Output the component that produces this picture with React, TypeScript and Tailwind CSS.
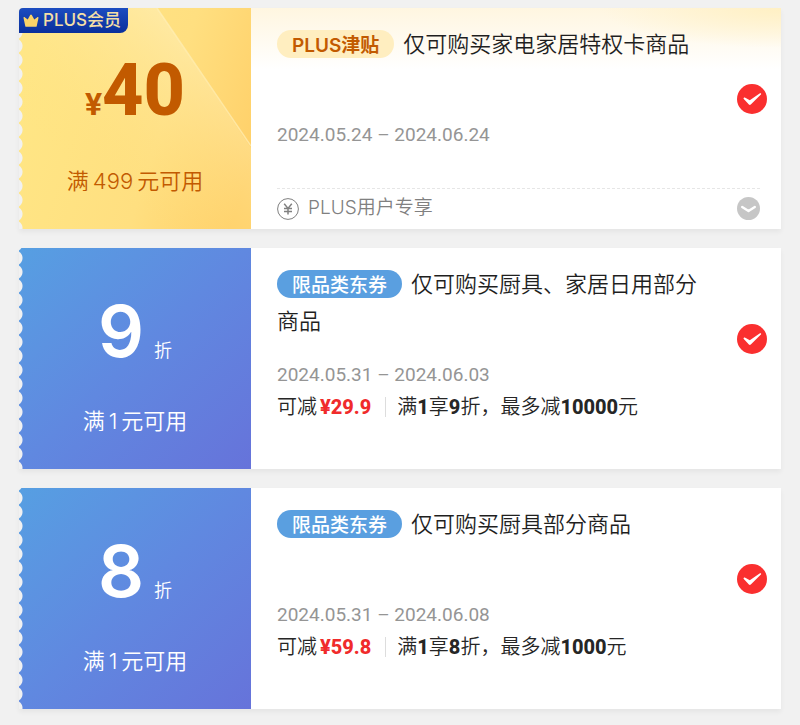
import { useState } from "react";
import { clsx } from "clsx";

type Coupon = {
  id: string;
  plus?: boolean;
  amount: string;
  threshold: string;
  tag: string;
  title: string;
  date: string;
  save?: string;
  rule?: { spend: string; rate: string; max: string };
};

const coupons: Coupon[] = [
  {
    id: "plus-40",
    plus: true,
    amount: "40",
    threshold: "499",
    tag: "PLUS津贴",
    title: "仅可购买家电家居特权卡商品",
    date: "2024.05.24 – 2024.06.24",
  },
  {
    id: "off-9",
    amount: "9",
    threshold: "1",
    tag: "限品类东券",
    title: "仅可购买厨具、家居日用部分商品",
    date: "2024.05.31 – 2024.06.03",
    save: "¥29.9",
    rule: { spend: "1", rate: "9", max: "10000" },
  },
  {
    id: "off-8",
    amount: "8",
    threshold: "1",
    tag: "限品类东券",
    title: "仅可购买厨具部分商品",
    date: "2024.05.31 – 2024.06.08",
    save: "¥59.8",
    rule: { spend: "1", rate: "8", max: "1000" },
  },
];

const PlusBadge = () => (
  <div className="absolute left-0 top-0 z-10 flex h-[25px] items-center gap-1 rounded-tl rounded-br-lg bg-gradient-to-b from-[#1c4cc0] to-[#0a2f9c] pr-[7px] pl-1 text-[17px] font-medium text-[#f5dfa6]">
    <svg viewBox="0 0 16 13" className="h-[13px] w-4">
      <path
        d="M2.3 12.2 0.6 4.3C0.3 3 1.2 2.7 2 3.4L4.7 5.6 7.2 1.1c.4-.8 1.2-.8 1.6 0l2.5 4.5L14 3.4c.8-.7 1.7-.4 1.4.9l-1.7 7.9c-.1.4-.3.6-.7.6H3c-.4 0-.6-.2-.7-.6Z"
        fill="#fbd368"
      />
    </svg>
    <span>PLUS会员</span>
  </div>
);

// scalloped left edge of the ticket
const TicketEdge = () => (
  <div className="absolute inset-y-0 left-0 w-1 bg-[radial-gradient(circle_8px_at_-4px_50%,#f1f1f1_7px,transparent_8px)] bg-[length:4px_14px] bg-[position:0_3px] bg-repeat-y" />
);

const CouponValue = ({ coupon }: { coupon: Coupon }) => (
  <div
    className={clsx(
      "relative flex w-[232px] shrink-0 flex-col items-center",
      coupon.plus
        ? "bg-[#ffe284] text-[#c25a00]"
        : "bg-gradient-to-br from-[#569fe2] via-[#6088e0] to-[#6673da] text-white"
    )}
  >
    {coupon.plus && (
      <svg viewBox="0 0 232 221" preserveAspectRatio="none" className="absolute inset-0 size-full">
        <defs>
          <linearGradient id="base" x1="0" y1="0.4" x2="1" y2="0.7">
            <stop offset="0" stopColor="#ffe685" />
            <stop offset="0.6" stopColor="#ffdf80" />
            <stop offset="1" stopColor="#ffd069" />
          </linearGradient>
          <linearGradient id="shine" x1="0.85" y1="0.1" x2="0.3" y2="0.75">
            <stop offset="0" stopColor="#fff3c8" stopOpacity="0.6" />
            <stop offset="1" stopColor="#ffe07c" stopOpacity="0" />
          </linearGradient>
        </defs>
        <rect width="232" height="221" fill="url(#base)" />
        <path d="M0 0H138L232 140V221H0Z" fill="url(#shine)" />
        <path d="M138 0 232 138" stroke="#fff0b8" strokeOpacity="0.7" strokeWidth="1.5" />
      </svg>
    )}
    <TicketEdge />
    {coupon.plus && <PlusBadge />}
    <div className="relative mt-[47px] flex h-[72px] items-baseline leading-[72px]">
      {coupon.plus ? (
        <>
          <span className="font-[Roboto] text-[32px] leading-none font-bold">¥</span>
          <span className="font-[Roboto] text-[72px] font-extrabold">{coupon.amount}</span>
        </>
      ) : (
        <>
          <span className="text-[72px] font-semibold">{coupon.amount}</span>
          <span className="ml-2.5 text-lg leading-none font-[350]">折</span>
        </>
      )}
    </div>
    <div className="relative mt-[38px] text-[22px] leading-8 font-[350]">
      满<span className="mx-1">{coupon.threshold}</span>元可用
    </div>
  </div>
);

const CheckMark = ({ label }: { label: string }) => {
  const [checked, setChecked] = useState(true);

  return (
    <label className="mt-[76px] grid size-[30px] shrink-0 cursor-pointer">
      <input
        type="checkbox"
        aria-label={label}
        checked={checked}
        onChange={() => setChecked(!checked)}
        className="col-start-1 row-start-1 size-[30px] appearance-none rounded-full border border-gray-300 checked:border-0 checked:bg-[#fa2f2f]"
      />
      {checked && (
        <svg viewBox="0 0 30 30" className="pointer-events-none col-start-1 row-start-1 size-[30px]">
          <path
            d="M6.6 14.8C6.3 14 7 13.3 7.8 13.5L12.8 16.3 22.6 9.4C23.6 8.8 24.7 9.6 23.9 10.6L13.8 20.6C13.1 21.3 12.5 21.2 11.9 20.6Z"
            fill="white"
          />
        </svg>
      )}
    </label>
  );
};

const CouponCard = ({ coupon }: { coupon: Coupon }) => {
  const { plus, tag, title, date, save, rule } = coupon;

  return (
    <li className="flex min-h-[221px] shadow-[0_3px_5px_rgba(0,0,0,0.05)]">
      <CouponValue coupon={coupon} />

      <div
        className={clsx(
          "flex min-w-0 flex-1 flex-col bg-white pl-[26px]",
          plus &&
            "bg-[radial-gradient(ellipse_180px_40px_at_100%_0,#fff0c4,transparent),linear-gradient(#fff6e0,#fff_28%)]"
        )}
      >
        <div className="flex gap-5 pr-[14px]">
          <div className="min-w-0 flex-1 pt-[18px]">
            <h2 className="min-h-[74px] text-[22px] leading-[37px] font-[350] text-[#1f1f1f]">
              <span
                className={clsx(
                  "mr-[9px] inline-block h-7 rounded-full px-[15px] text-[19px] leading-8",
                  plus ? "bg-[#ffeec0] font-semibold text-[#c25a00]" : "bg-[#5a9fe0] font-medium text-white"
                )}
              >
                {tag}
              </span>
              {title}
            </h2>
            <p className="mt-[21px] font-[Roboto] text-[19px] leading-7 font-normal text-[#959595]">{date}</p>
            {rule && (
              <p className="flex items-center font-[Roboto,'Noto_Sans_CJK_SC',sans-serif] text-xl leading-9 font-[350] text-[#262626]">
                可减<b className="ml-[3px] font-extrabold text-[#f02b2b]">{save}</b>
                <span className="mr-[11px] ml-[14px] h-5 w-px bg-[#dddddd]" />
                <span>
                  满<b className="font-extrabold">{rule.spend}</b>享<b className="font-extrabold">{rule.rate}</b>
                  折，最多减<b className="font-extrabold">{rule.max}</b>元
                </span>
              </p>
            )}
          </div>
          <CheckMark label={title} />
        </div>

        {plus && (
          <div className="mt-[39px] mr-[21px] flex h-10 items-center border-t border-dashed border-[#e6e6e6] text-[19px] font-[350] text-[#808080]">
            <svg viewBox="0 0 22 22" className="mr-[9px] size-[22px]" fill="none" stroke="currentColor">
              <circle cx="11" cy="11" r="10.4" />
              <path d="M7.2 5.8 11 10.4 14.8 5.8M11 10.4V16.6M7 10.6H15M7 13.4H15" strokeWidth="1.5" />
            </svg>
            <span>PLUS用户专享</span>
            <button type="button" aria-label="展开" className="ml-auto size-[23px] rounded-full bg-[#c6c6c6]">
              <svg viewBox="0 0 23 23" fill="none" stroke="white" strokeWidth="2.4" strokeLinecap="round" strokeLinejoin="round">
                <path d="M5.2 10 11.5 14 17.8 10" />
              </svg>
            </button>
          </div>
        )}
      </div>
    </li>
  );
};

export default function App() {
  return (
    <main className="min-h-screen bg-[#f1f1f1] px-[19px] pt-2 pb-4 font-[Inter,'Noto_Sans_CJK_SC',sans-serif]">
      <ul className="flex flex-col gap-[19px]">
        {coupons.map((coupon) => (
          <CouponCard key={coupon.id} coupon={coupon} />
        ))}
      </ul>
    </main>
  );
}
